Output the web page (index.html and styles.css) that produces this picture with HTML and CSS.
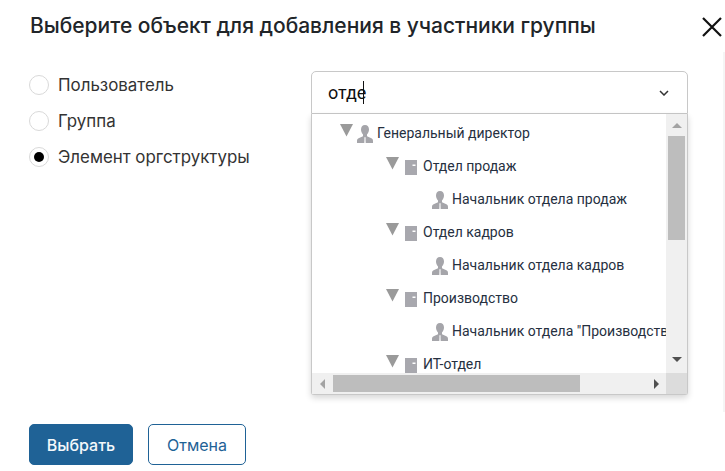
FILE: index.html
```html
<!DOCTYPE html>
<html lang="ru">
<head>
<meta charset="utf-8">
<title>Выбор объекта</title>
<link rel="stylesheet" href="styles.css">
</head>
<body>
<svg class="defs" width="0" height="0" aria-hidden="true">
  <symbol id="tri" viewBox="0 0 13 13"><path d="M0 0H13L6.500 12.500Z" fill="#9a9a9a"/></symbol>
  <symbol id="person" viewBox="0 0 16 18"><path d="M8 0C5.400 0 4 1.900 4 4.600 4 6.800 4.900 8.400 6 9.500V11.300L1.600 13.200C.5 13.700 0 14.600 0 16V18H7.300L7.500 13.500 7 12.500H9L8.500 13.500 8.700 18H16V16C16 14.600 15.500 13.700 14.400 13.200L10 11.300V9.500C11.100 8.400 12 6.800 12 4.600 12 1.900 10.600 0 8 0Z" fill="#a5a5aa"/></symbol>
  <symbol id="door" viewBox="0 0 12 15"><path d="M0 0H12V15H0Z" fill="#a8a8ae"/><path d="M7.500 4.500H10.500V6H7.500Z" fill="#fff"/></symbol>
</svg>
<main class="dialog">
  <header class="head">
    <h1 class="title">Выберите объект для добавления в участники группы</h1>
    <svg class="close" width="20" height="20" viewBox="0 0 20 20"><path d="M1 1L19 19M19 1L1 19" stroke="#111" stroke-width="2.200" fill="none"/></svg>
  </header>
  <div class="body">
    <div class="radios">
      <div class="radio-row"><span class="radio"></span><span>Пользователь</span></div>
      <div class="radio-row"><span class="radio"></span><span>Группа</span></div>
      <div class="radio-row"><span class="radio on"></span><span>Элемент оргструктуры</span></div>
    </div>
    <div class="picker">
      <div class="input">
        <span class="value">отде</span><span class="caret"></span>
        <svg class="chev" width="10" height="6" viewBox="0 0 10 6"><path d="M1 1L5 5L9 1" stroke="#333" stroke-width="1.500" fill="none"/></svg>
      </div>
      <div class="drop">
        <div class="tree-wrap">
          <ul class="tree">
            <li class="node l0"><svg class="tri"><use href="#tri"/></svg><svg class="person"><use href="#person"/></svg><span>Генеральный директор</span></li>
            <li class="node l1"><svg class="tri"><use href="#tri"/></svg><svg class="door"><use href="#door"/></svg><span>Отдел продаж</span></li>
            <li class="node l2"><svg class="person"><use href="#person"/></svg><span>Начальник отдела продаж</span></li>
            <li class="node l1"><svg class="tri"><use href="#tri"/></svg><svg class="door"><use href="#door"/></svg><span>Отдел кадров</span></li>
            <li class="node l2"><svg class="person"><use href="#person"/></svg><span>Начальник отдела кадров</span></li>
            <li class="node l1"><svg class="tri"><use href="#tri"/></svg><svg class="door"><use href="#door"/></svg><span>Производство</span></li>
            <li class="node l2"><svg class="person"><use href="#person"/></svg><span>Начальник отдела "Производство"</span></li>
            <li class="node l1"><svg class="tri"><use href="#tri"/></svg><svg class="door"><use href="#door"/></svg><span>ИТ-отдел</span></li>
          </ul>
          <div class="vbar">
            <span class="arrow up"></span>
            <div class="vtrack"><div class="vthumb"></div></div>
            <span class="arrow down"></span>
          </div>
        </div>
        <div class="hbar">
          <span class="arrow left"></span>
          <div class="htrack"><div class="hthumb"></div></div>
          <span class="arrow right"></span>
          <span class="corner"></span>
        </div>
      </div>
    </div>
  </div>
  <footer class="foot">
    <button class="btn primary" type="button">Выбрать</button>
    <button class="btn ghost" type="button">Отмена</button>
  </footer>
</main>
<div class="strip"></div>
</body>
</html>
```

FILE: styles.css
```css
html, body { margin: 0; padding: 0; height: 100%; overflow: hidden; background: #fff; }
body { width: 725px; height: 471px; position: relative; font-family: Inter, "Liberation Sans", sans-serif; color: #23272b; }
.defs { position: absolute; }
.dialog { width: 725px; height: 471px; box-sizing: border-box; padding: 12px 0 0 30px; display: flex; flex-direction: column; }
.head { display: flex; align-items: center; height: 28px; }
.title { margin: 0; font-size: 21px; line-height: 28px; font-weight: 500; white-space: nowrap; color: #212529; width: 672px; letter-spacing: -0.01px; }
.close { flex: none; margin-top: 2px; }
.body { display: flex; margin-top: 31px; }
.radios { width: 282px; margin-top: -4px; margin-left: -1px; flex: none; }
.radio-row { display: flex; align-items: center; height: 36px; gap: 9px; font-size: 16.900px; color: #333; line-height: 24px; }
.radio { width: 18px; height: 18px; border: 1px solid #d9d9d9; border-radius: 50%; background: #fff; flex: none; position: relative; }
.radio.on::after { content: ""; position: absolute; left: 4px; top: 4px; width: 10px; height: 10px; border-radius: 50%; background: #000; }
.picker { width: 377px; flex: none; }
.input { height: 43px; box-sizing: border-box; border: 1px solid #c8c8c8; border-radius: 5px 5px 0 0; display: flex; align-items: center; padding: 0 18px 0 16px; font-family: Roboto, sans-serif; font-size: 18px; color: #111; }
.caret { width: 1px; height: 23px; background: #111; margin-left: -3px; }
.chev { margin-left: auto; }
.drop { height: 281px; box-sizing: border-box; border: 1px solid #c8c8c8; border-top: 0; border-radius: 0 0 3px 3px; box-shadow: 0 3px 6px rgba(0,0,0,.16); display: flex; flex-direction: column; background: #fff; }
.tree-wrap { flex: 1; display: flex; min-height: 0; }
.tree { flex: 1; min-width: 0; overflow: hidden; list-style: none; margin: 0; padding: 2px 0 0; font-family: Roboto, sans-serif; font-size: 14px; color: #26303f; }
.node { display: flex; align-items: center; height: 33px; flex: none; white-space: nowrap; }
.l0 { padding-left: 28px; }
.l1 { padding-left: 74px; }
.l2 { padding-left: 120px; }
.tri { width: 13px; height: 13px; flex: none; margin-right: 4px; margin-top: -5px; }
.l1 .tri { margin-right: 6px; }
.person { width: 16px; height: 18px; flex: none; margin-right: 4px; margin-top: 3px; }
.door { width: 12px; height: 15px; flex: none; margin-right: 6px; margin-top: 4px; }
.vbar { width: 21px; flex: none; background: #f0f0f0; display: flex; flex-direction: column; align-items: center; }
.vtrack { flex: 1; width: 17px; }
.vthumb { width: 17px; height: 104px; margin-top: 8px; background: #bdbdbd; }
.hbar { height: 21px; flex: none; background: #f0f0f0; display: flex; align-items: center; }
.htrack { flex: 1; height: 17px; }
.hthumb { width: 247px; height: 17px; background: #bdbdbd; margin-left: 8px; }
.corner { width: 21px; height: 21px; background: #dcdcdc; flex: none; }
.arrow { width: 0; height: 0; flex: none; border-style: solid; border-color: transparent; }
.arrow.up { border-width: 0 5px 5px; border-bottom-color: #a3a3a3; margin-top: 9px; }
.arrow.down { border-width: 5px 5px 0; border-top-color: #505050; margin-bottom: 11px; }
.arrow.left { border-width: 5px 5px 5px 0; border-right-color: #a3a3a3; margin-left: 8px; }
.arrow.right { border-width: 5px 0 5px 5px; border-left-color: #505050; margin-right: 7px; }
.foot { display: flex; gap: 15px; margin-top: 29px; margin-left: -1px; }
.btn { height: 41px; box-sizing: border-box; border-radius: 5px; font-family: Inter, sans-serif; font-size: 16px; cursor: pointer; }
.primary { width: 104px; background: #1f6296; border: 1px solid #1f6296; color: #f4f8fb; font-weight: 500; }
.ghost { width: 98px; background: #fff; border: 1px solid #1f6296; color: #1f6296; }
.strip { position: absolute; left: 723px; top: 52px; width: 2px; height: 360px; background: #f5f5f5; }
```
